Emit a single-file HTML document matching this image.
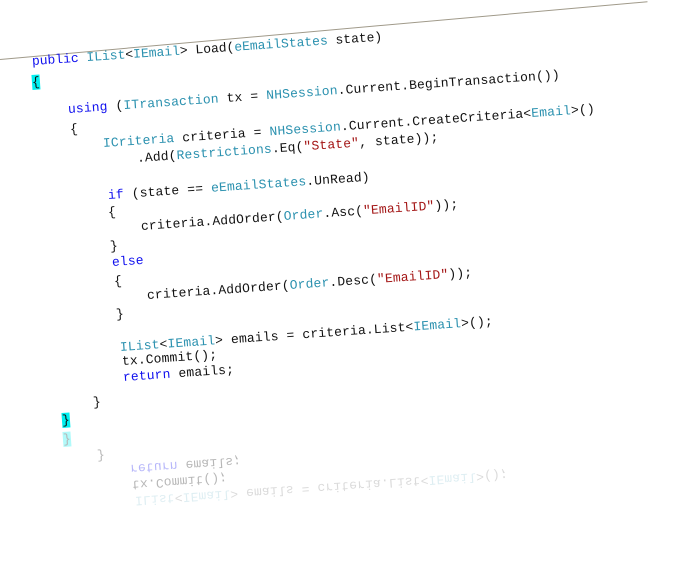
<!DOCTYPE html>
<html><head><meta charset="utf-8"><style>
body{margin:0;width:691px;height:561px;background:#fff;overflow:hidden;position:relative;font-family:"Liberation Mono",monospace;font-size:13px;color:#111}
.l{position:absolute;white-space:pre;line-height:16px;transform-origin:0 50%;transform:rotate(-4deg);letter-spacing:.15px}
.k{color:#1010ee}.t{color:#2b91af}.s{color:#a31515}
.hl{background:#00f0f0}
.r{opacity:.3}
.r2{opacity:.15}
#line{position:absolute;left:0;top:59px;width:650px;height:1px;background:#a09a8a;transform-origin:0 0;transform:rotate(-5.1deg)}
</style></head><body>
<div id="line"></div>
<div class="l" style="left:32px;top:54px;letter-spacing:0"><span class="k">public</span> <span class="t">IList</span>&lt;<span class="t">IEmail</span>&gt; Load(<span class="t">eEmailStates</span> state)</div>
<div class="l" style="left:32px;top:75px"><span class="hl">{</span></div>
<div class="l" style="left:68px;top:102px"><span class="k">using</span> (<span class="t">ITransaction</span> tx = <span class="t">NHSession</span>.Current.BeginTransaction())</div>
<div class="l" style="left:70px;top:122px">{</div>
<div class="l" style="left:103px;top:136px"><span class="t">ICriteria</span> criteria = <span class="t">NHSession</span>.Current.CreateCriteria&lt;<span class="t">Email</span>&gt;()</div>
<div class="l" style="left:137px;top:151px">.Add(<span class="t">Restrictions</span>.Eq(<span class="s">"State"</span>, state));</div>
<div class="l" style="left:108px;top:188px"><span class="k">if</span> (state == <span class="t">eEmailStates</span>.UnRead)</div>
<div class="l" style="left:108px;top:205px">{</div>
<div class="l" style="left:141px;top:219px">criteria.AddOrder(<span class="t">Order</span>.Asc(<span class="s">"EmailID"</span>));</div>
<div class="l" style="left:110px;top:239px">}</div>
<div class="l" style="left:112px;top:255px"><span class="k">else</span></div>
<div class="l" style="left:114px;top:274px">{</div>
<div class="l" style="left:147px;top:288px">criteria.AddOrder(<span class="t">Order</span>.Desc(<span class="s">"EmailID"</span>));</div>
<div class="l" style="left:116px;top:307px">}</div>
<div class="l" style="left:120px;top:340px"><span class="t">IList</span>&lt;<span class="t">IEmail</span>&gt; emails = criteria.List&lt;<span class="t">IEmail</span>&gt;();</div>
<div class="l" style="left:122px;top:354px">tx.Commit();</div>
<div class="l" style="left:123px;top:370px"><span class="k">return</span> emails;</div>
<div class="l" style="left:93px;top:395px">}</div>
<div class="l" style="left:62px;top:413px"><span class="hl">}</span></div>
<div class="l r" style="left:63px;top:432px"><span class="hl">}</span></div>
<div class="l r" style="left:97px;top:448px">}</div>
<div class="l r" style="left:130px;top:460px;transform:rotate(-4deg) scaleY(-1)"><span class="k">return</span> emails;</div>
<div class="l r" style="left:132px;top:476px;transform:rotate(-4deg) scaleY(-1)">tx.Commit();</div>
<div class="l r2" style="left:135px;top:492px;transform:rotate(-4deg) scaleY(-1)"><span class="t">IList</span>&lt;<span class="t">IEmail</span>&gt; emails = criteria.List&lt;<span class="t">IEmail</span>&gt;();</div>
</body></html>
